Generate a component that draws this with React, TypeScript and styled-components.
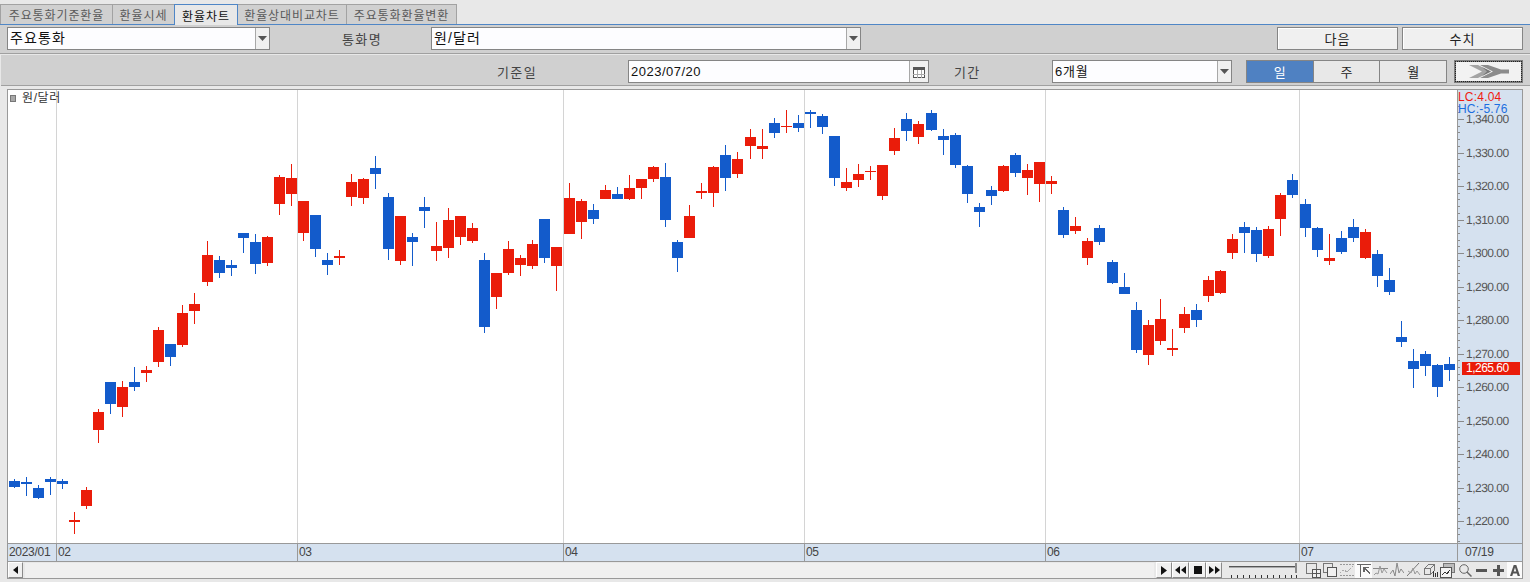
import styled, { createGlobalStyle } from "styled-components"

const FONT = `"Liberation Sans", "Noto Sans CJK KR", sans-serif`

const GlobalStyle = createGlobalStyle`
  html, body {
    margin: 0;
    padding: 0;
    background: #e8e8e8;
    overflow: hidden;
  }
  * {
    box-sizing: border-box;
  }
`

const RED = "#ea1c0a"
const BLUE = "#135bcb"

// x, body top, body bottom, wick top, wick bottom, up
type Candle = [number, number, number, number, number, 0 | 1]

const CANDLES: Candle[] = [
  [14, 481, 487, 479, 488, 0], [26, 482, 484, 477, 496, 0], [38, 488, 498, 485, 499, 0],
  [50, 479, 482, 477, 495, 0], [62, 481, 484, 479, 489, 0], [74, 520, 522, 512, 534, 1],
  [86, 490, 506, 487, 509, 1], [98, 412, 430, 409, 443, 1], [110, 382, 404, 382, 414, 0],
  [122, 387, 407, 381, 417, 1], [134, 382, 387, 367, 391, 0], [146, 370, 373, 366, 382, 1],
  [158, 330, 362, 327, 367, 1], [170, 344, 357, 344, 366, 0], [182, 313, 345, 305, 347, 1],
  [194, 304, 311, 293, 324, 1], [207, 255, 282, 241, 286, 1], [219, 260, 273, 256, 278, 0],
  [231, 265, 268, 260, 276, 0], [243, 233, 238, 233, 253, 0], [255, 242, 264, 234, 274, 0],
  [267, 237, 263, 236, 266, 1], [279, 177, 204, 175, 215, 1], [291, 178, 194, 164, 206, 1],
  [303, 201, 233, 201, 241, 1], [315, 215, 249, 215, 257, 0], [327, 260, 265, 253, 275, 0],
  [339, 256, 258, 250, 265, 1], [351, 182, 197, 174, 206, 1], [363, 179, 198, 178, 204, 1],
  [375, 168, 174, 156, 189, 0], [388, 197, 249, 193, 260, 0], [400, 216, 261, 216, 265, 1],
  [412, 237, 242, 233, 266, 0], [424, 207, 211, 197, 228, 0], [436, 246, 251, 222, 261, 1],
  [448, 220, 248, 208, 258, 1], [460, 216, 237, 216, 245, 1], [472, 228, 241, 223, 243, 1],
  [484, 260, 327, 253, 333, 0], [496, 273, 297, 273, 309, 1], [508, 249, 273, 241, 275, 1],
  [520, 258, 265, 255, 276, 1], [532, 244, 266, 240, 269, 1], [544, 219, 258, 219, 263, 0],
  [556, 247, 266, 247, 291, 1], [569, 198, 234, 183, 234, 1], [581, 201, 222, 199, 239, 1],
  [593, 210, 219, 204, 224, 0], [605, 190, 199, 185, 199, 1], [617, 194, 199, 187, 199, 0],
  [629, 188, 199, 175, 200, 1], [641, 179, 188, 179, 199, 1], [653, 167, 179, 166, 182, 1],
  [665, 177, 220, 163, 227, 0], [677, 242, 258, 240, 272, 0], [689, 216, 238, 205, 238, 1],
  [701, 191, 193, 183, 199, 1], [713, 167, 193, 166, 207, 1], [725, 155, 178, 145, 191, 0],
  [737, 159, 174, 152, 178, 1], [750, 137, 146, 129, 159, 1], [762, 146, 149, 129, 159, 1],
  [774, 123, 133, 118, 138, 0], [786, 126, 127, 110, 133, 1], [798, 123, 128, 115, 132, 0],
  [810, 112, 114, 110, 128, 0], [822, 116, 127, 114, 134, 0], [834, 136, 178, 136, 186, 0],
  [846, 182, 188, 168, 191, 1], [858, 174, 180, 164, 187, 1], [870, 171, 172, 166, 180, 1],
  [882, 165, 196, 165, 200, 1], [894, 138, 151, 128, 155, 1], [906, 119, 131, 113, 141, 0],
  [918, 124, 137, 121, 144, 1], [931, 113, 130, 110, 131, 0], [943, 136, 140, 129, 155, 0],
  [955, 135, 165, 133, 168, 0], [967, 166, 194, 165, 203, 0], [979, 207, 212, 203, 227, 0],
  [991, 190, 196, 186, 205, 0], [1003, 166, 191, 165, 192, 1], [1015, 155, 173, 153, 177, 0],
  [1027, 170, 178, 164, 195, 1], [1039, 162, 184, 162, 202, 1], [1051, 181, 184, 176, 194, 1],
  [1063, 210, 235, 207, 238, 0], [1075, 226, 231, 217, 234, 1], [1087, 241, 258, 238, 265, 1],
  [1099, 228, 242, 225, 245, 0], [1112, 262, 283, 260, 284, 0], [1124, 287, 294, 273, 294, 0],
  [1136, 310, 350, 302, 353, 0], [1148, 325, 355, 320, 365, 1], [1160, 319, 341, 299, 345, 1],
  [1172, 348, 350, 329, 356, 1], [1184, 314, 328, 307, 333, 1], [1196, 310, 320, 304, 327, 0],
  [1208, 280, 296, 276, 302, 1], [1220, 271, 293, 270, 294, 1], [1232, 239, 253, 234, 259, 1],
  [1244, 227, 233, 222, 253, 0], [1256, 230, 254, 227, 262, 0], [1268, 229, 256, 226, 258, 1],
  [1280, 195, 219, 193, 236, 1], [1292, 180, 195, 174, 198, 0], [1305, 204, 228, 199, 237, 0],
  [1317, 228, 250, 227, 257, 0], [1329, 258, 261, 234, 265, 1], [1341, 238, 252, 231, 254, 0],
  [1353, 227, 238, 219, 242, 0], [1365, 232, 258, 229, 259, 1], [1377, 254, 276, 250, 287, 0],
  [1389, 280, 292, 268, 295, 0], [1401, 337, 342, 321, 347, 0], [1413, 361, 369, 349, 388, 0],
  [1425, 354, 366, 351, 376, 0], [1437, 365, 387, 364, 397, 0], [1449, 364, 370, 357, 381, 0],
]

const GRID_X = [56, 297, 563, 804, 1045, 1299]
const PRICES = [1340, 1330, 1320, 1310, 1300, 1290, 1280, 1270, 1260, 1250, 1240, 1230, 1220]
const priceY = (v: number) => Math.round(186 + (1320 - v) * 3.35)

const Page = styled.div`
  width: 1530px;
  height: 582px;
  overflow: hidden;
  background: #e8e8e8;
  font-family: ${FONT};
  color: #222;
`

const TabBar = styled.div`
  display: flex;
  align-items: flex-end;
  height: 25px;
  padding-left: 1px;
  border-bottom: 1px solid #4f86c6;
`

const Tab = styled.div<{ $width: number; $active?: boolean }>`
  width: ${(p) => p.$width}px;
  height: ${(p) => (p.$active ? 21 : 20)}px;
  margin-bottom: ${(p) => (p.$active ? -1 : 0)}px;
  margin-left: -1px;
  display: flex;
  align-items: center;
  justify-content: center;
  font-size: 12px;
  letter-spacing: 0.9px;
  color: ${(p) => (p.$active ? "#111" : "#5a5a5a")};
  background: ${(p) => (p.$active ? "#e8e8e8" : "#d0d0d0")};
  border: 1px solid ${(p) => (p.$active ? "#4f86c6" : "#a2a2a2")};
  border-bottom: ${(p) => (p.$active ? "none" : "0")};
  position: relative;
  z-index: ${(p) => (p.$active ? 1 : 0)};
`

const TopRow = styled.div`
  display: flex;
  align-items: center;
  height: 29px;
  padding: 0 7px 1px;
  background: #d0d0d0;
  border-bottom: 1px solid #a0a0a0;
`

const FilterRow = styled.div`
  display: flex;
  align-items: center;
  height: 31px;
  margin: 1px 0 0 1px;
  padding: 3px 0 0 495px;
  background: #d0d0d0;
  border-bottom: 1px solid #a0a0a0;
`

const FieldLabel = styled.div<{ $width: number; $gap?: number; $indent?: number }>`
  width: ${(p) => p.$width}px;
  margin-left: ${(p) => p.$gap ?? 0}px;
  padding-left: ${(p) => p.$indent ?? 0}px;
  font-size: 13px;
  letter-spacing: 1.4px;
  color: #444;
  flex: none;
`

const SelectBox = styled.div<{ $width: number; $gap?: number }>`
  width: ${(p) => p.$width}px;
  height: 23px;
  margin-left: ${(p) => p.$gap ?? 0}px;
  flex: none;
  display: flex;
  align-items: stretch;
  background: #fdfdff;
  border: 1px solid #858585;
`

const SelectText = styled.div<{ $size?: number; $spacing?: number }>`
  flex: 1;
  padding-left: 2px;
  font-size: ${(p) => p.$size ?? 14}px;
  line-height: 21px;
  letter-spacing: ${(p) => p.$spacing ?? 1.1}px;
  color: #111;
`

const SelectArrow = styled.div<{ $width?: number }>`
  width: ${(p) => p.$width ?? 14}px;
  display: flex;
  align-items: center;
  justify-content: center;
  background: #f0f0f0;
  border-left: 1px solid #a8a8a8;
  svg {
    display: block;
  }
`

const ActionButton = styled.button<{ $gap?: string }>`
  width: 121px;
  height: 23px;
  margin-left: ${(p) => p.$gap ?? "4px"};
  padding: 0;
  flex: none;
  font-family: ${FONT};
  font-size: 13px;
  letter-spacing: 1px;
  color: #222;
  background: #f0f0f0;
  border: 1px solid #858585;
  box-shadow: inset 1px 1px 0 #fff;
`

const Segment = styled.div`
  width: 201px;
  height: 23px;
  margin-left: 14px;
  flex: none;
  display: flex;
  border: 1px solid #858585;
`

const SegmentItem = styled.div<{ $active?: boolean }>`
  flex: 1;
  display: flex;
  align-items: center;
  justify-content: center;
  font-size: 13px;
  color: ${(p) => (p.$active ? "#fff" : "#222")};
  background: ${(p) => (p.$active ? "#4f81c2" : "#e8e8e8")};
  & + & {
    border-left: 1px solid #858585;
  }
`

const NextButton = styled.div`
  width: 69px;
  height: 23px;
  margin-left: 7px;
  flex: none;
  display: flex;
  align-items: center;
  justify-content: center;
  background: #f2f2f2;
  border: 2px solid #7d7d7d;
  outline: 1px dotted #222;
  outline-offset: -2px;
`

const ChartFrame = styled.div`
  width: 1516px;
  margin: 3px 0 0 7px;
  background: #e8e8e8;
  border: 1px solid #999;
`

const PlotRow = styled.div`
  display: flex;
  height: 453px;
`

const Plot = styled.div`
  position: relative;
  width: 1449px;
  flex: none;
  background: #fff;
  svg {
    display: block;
  }
`

const Legend = styled.div`
  position: absolute;
  top: 1px;
  left: 2px;
  display: flex;
  align-items: center;
  gap: 6px;
  font-size: 12px;
  line-height: 14px;
  letter-spacing: 0.6px;
  color: #333;
`

const LegendMark = styled.span`
  width: 6px;
  height: 7px;
  background: #a8a8a8;
  border: 1px solid #777;
`

const PriceAxis = styled.div`
  position: relative;
  flex: 1;
  background: #d5e1ef;
  border-left: 1px solid #999;
  overflow: hidden;
  svg {
    display: block;
  }
`

const AxisNote = styled.div<{ $color: string; $top: number }>`
  position: absolute;
  left: 0;
  top: ${(p) => p.$top}px;
  font-size: 12px;
  line-height: 13px;
  letter-spacing: 0.2px;
  color: ${(p) => p.$color};
`

const PriceTag = styled.div`
  position: absolute;
  left: 4px;
  top: 272px;
  width: 58px;
  height: 13px;
  padding-left: 4px;
  font-size: 12px;
  line-height: 13px;
  letter-spacing: -0.5px;
  color: #fff;
  background: ${RED};
`

const DateAxis = styled.div`
  display: grid;
  grid-template-columns: 48px 241px 266px 241px 241px 254px 158px 65px;
  height: 19px;
  background: #d5e1ef;
  border-top: 1px solid #999;
  border-bottom: 1px solid #999;
`

const DateCell = styled.div<{ $wide?: boolean }>`
  padding-left: ${(p) => (p.$wide ? 7 : 1)}px;
  font-size: 12px;
  line-height: 17px;
  letter-spacing: -0.3px;
  color: #444;
  & + & {
    border-left: 1px solid #999;
  }
`

const ToolRow = styled.div`
  display: flex;
  align-items: stretch;
  height: 16px;
`

const ScrollButton = styled.div<{ $width: number; $gap?: number }>`
  width: ${(p) => p.$width}px;
  margin-left: ${(p) => p.$gap ?? 0}px;
  flex: none;
  display: flex;
  align-items: center;
  justify-content: center;
  background: #f0f0f0;
  border: 1px solid #fff;
  border-right-color: #8a8a8a;
  border-bottom-color: #8a8a8a;
`

const ScrollTrack = styled.div`
  width: 1129px;
  margin: 1px 0 0 2px;
  flex: none;
  background: #f0f0f0;
`

const ToolIcon = styled.div<{ $width: number; $gap?: number; $on?: boolean }>`
  width: ${(p) => p.$width}px;
  margin-left: ${(p) => p.$gap ?? 0}px;
  flex: none;
  display: flex;
  align-items: center;
  justify-content: center;
  background: ${(p) => (p.$on ? "#fbfbfb" : "transparent")};
  svg {
    display: block;
  }
`

const Arrow = ({ size = 9 }: { size?: number }) => (
  <svg width={size} height={5} viewBox="0 0 9 5">
    <path d="M0 0h9L4.500 5z" fill="#555" />
  </svg>
)

const Chart = () => (
  <svg width={1449} height={453} viewBox="8 90 1449 453" shapeRendering="crispEdges">
    {GRID_X.map((x) => (
      <rect key={x} x={x} y={90} width={1} height={453} fill="#d4d4d4" />
    ))}
    {CANDLES.map(([x, top, bottom, high, low, up]) => (
      <g key={x} fill={up ? RED : BLUE}>
        <rect x={x} y={high} width={1} height={low - high} />
        <rect x={x - 5} y={top} width={11} height={bottom - top} />
      </g>
    ))}
  </svg>
)

const AxisScale = () => {
  const minor: number[] = []
  for (let v = 1344; v >= 1212; v -= 2) {
    if (v % 10 !== 0) minor.push(v)
  }
  return (
    <svg width={64} height={453} viewBox="1458 90 64 453" shapeRendering="crispEdges">
      {minor.map((v) => (
        <rect key={v} x={1458} y={priceY(v)} width={2} height={1} fill="#8a8a8a" />
      ))}
      {PRICES.map((v) => (
        <g key={v}>
          <rect x={1458} y={priceY(v)} width={6} height={1} fill="#8a8a8a" />
          <text
            x={1466}
            y={priceY(v) + 4}
            fontFamily={FONT}
            fontSize={12}
            letterSpacing={-0.5}
            fill="#555"
            textRendering="geometricPrecision"
          >
            {v.toLocaleString("en-US")}.00
          </text>
        </g>
      ))}
    </svg>
  )
}

const Slider = () => (
  <svg width={70} height={16} viewBox="0 0 70 16" shapeRendering="crispEdges">
    <rect x={1} y={4} width={66} height={1} fill="#555" />
    <rect x={1} y={5} width={66} height={1} fill="#aaa" />
    <path d="M67 1h2v10h-2z" fill="#8a8a8a" />
    {[3, 9, 15, 21, 27, 33, 39, 45, 51, 57, 63, 68].map((x) => (
      <rect key={x} x={x} y={13} width={1} height={3} fill="#333" />
    ))}
  </svg>
)

const S = { stroke: "#777", fill: "none" }

const App = () => {
  return (
    <Page>
      <GlobalStyle />
      <TabBar>
        <Tab $width={113}>주요통화기준환율</Tab>
        <Tab $width={63}>환율시세</Tab>
        <Tab $width={64} $active>
          환율차트
        </Tab>
        <Tab $width={110}>환율상대비교차트</Tab>
        <Tab $width={111}>주요통화환율변환</Tab>
      </TabBar>

      <TopRow>
        <SelectBox $width={263}>
          <SelectText>주요통화</SelectText>
          <SelectArrow>
            <Arrow />
          </SelectArrow>
        </SelectBox>
        <FieldLabel $width={161} $indent={72}>
          통화명
        </FieldLabel>
        <SelectBox $width={430}>
          <SelectText>원/달러</SelectText>
          <SelectArrow>
            <Arrow />
          </SelectArrow>
        </SelectBox>
        <ActionButton $gap="416px">다음</ActionButton>
        <ActionButton>수치</ActionButton>
      </TopRow>

      <FilterRow>
        <FieldLabel $width={132} $indent={1}>
          기준일
        </FieldLabel>
        <SelectBox $width={301}>
          <SelectText $size={13} $spacing={0.5}>
            2023/07/20
          </SelectText>
          <SelectArrow $width={19}>
            <svg width={12} height={12} viewBox="0 0 12 12" shapeRendering="crispEdges">
              <rect x={0.5} y={1.5} width={11} height={10} fill="#fff" stroke="#555" />
              <rect x={0} y={1} width={12} height={3} fill="#555" />
              <path d="M4 4v8M8 4v8M0 8h12" stroke="#aaa" />
            </svg>
          </SelectArrow>
        </SelectBox>
        <FieldLabel $width={98} $gap={25}>
          기간
        </FieldLabel>
        <SelectBox $width={180}>
          <SelectText $size={13} $spacing={0.8}>
            6개월
          </SelectText>
          <SelectArrow>
            <Arrow />
          </SelectArrow>
        </SelectBox>
        <Segment>
          <SegmentItem $active>일</SegmentItem>
          <SegmentItem>주</SegmentItem>
          <SegmentItem>월</SegmentItem>
        </Segment>
        <NextButton>
          <svg width={40} height={13} viewBox="0 0 40 13">
            <path d="M0 0h9l13 6.500-13 6.500H0l13-6.500z" fill="#a4a4a4" />
            <path d="M11 0h8l13 4.500h8v4h-8L19 13h-8l13-6.500z" fill="#8c8c8c" />
            <path d="M13 2l9 4.500-9 4.500 5-4.500z" fill="#777" />
          </svg>
        </NextButton>
      </FilterRow>

      <ChartFrame>
        <PlotRow>
          <Plot>
            <Chart />
            <Legend>
              <LegendMark />
              원/달러
            </Legend>
          </Plot>
          <PriceAxis>
            <AxisScale />
            <AxisNote $color="#f01a10" $top={1}>
              LC:4.04
            </AxisNote>
            <AxisNote $color="#1c6fe0" $top={13}>
              HC:-5.76
            </AxisNote>
            <PriceTag>1,265.60</PriceTag>
          </PriceAxis>
        </PlotRow>

        <DateAxis>
          <DateCell>2023/01</DateCell>
          <DateCell>02</DateCell>
          <DateCell>03</DateCell>
          <DateCell>04</DateCell>
          <DateCell>05</DateCell>
          <DateCell>06</DateCell>
          <DateCell>07</DateCell>
          <DateCell $wide>07/19</DateCell>
        </DateAxis>

        <ToolRow>
          <ScrollButton $width={15}>
            <svg width={5} height={8} viewBox="0 0 5 8">
              <path d="M5 0v8L0 4z" fill="#111" />
            </svg>
          </ScrollButton>
          <ScrollTrack />
          <ScrollButton $width={16} $gap={2}>
            <svg width={6} height={9} viewBox="0 0 6 9">
              <path d="M0 0l6 4.500L0 9z" fill="#111" />
            </svg>
          </ScrollButton>
          <ScrollButton $width={17}>
            <svg width={11} height={8} viewBox="0 0 11 8">
              <path d="M5 0v8L0 4zM11 0v8L6 4z" fill="#111" />
            </svg>
          </ScrollButton>
          <ScrollButton $width={17}>
            <svg width={8} height={8} viewBox="0 0 8 8">
              <rect width={8} height={8} fill="#111" />
            </svg>
          </ScrollButton>
          <ScrollButton $width={16}>
            <svg width={11} height={8} viewBox="0 0 11 8">
              <path d="M0 0v8l5-4zM6 0v8l5-4z" fill="#111" />
            </svg>
          </ScrollButton>
          <ToolIcon $width={70} $gap={6}>
            <Slider />
          </ToolIcon>
          <ToolIcon $width={15} $gap={8}>
            <svg width={15} height={15} viewBox="0 0 15 15" shapeRendering="crispEdges">
              <rect x={0.5} y={0.500} width={10} height={10} {...S} />
              <rect x={6.500} y={6.500} width={8} height={8} fill="#f0f0f0" stroke="#555" />
              <path d="M10.500 6v9M6 10.500h9" stroke="#555" />
            </svg>
          </ToolIcon>
          <ToolIcon $width={14} $gap={2}>
            <svg width={14} height={14} viewBox="0 0 14 14" shapeRendering="crispEdges">
              <rect x={0.5} y={0.500} width={9} height={9} {...S} />
              <rect x={4.500} y={4.500} width={9} height={9} fill="#f0f0f0" stroke="#555" />
            </svg>
          </ToolIcon>
          <ToolIcon $width={16} $gap={2}>
            <svg width={16} height={14} viewBox="0 0 16 14" shapeRendering="crispEdges">
              <path d="M0.500 1.500h15M0.500 12.500h15" stroke="#999" strokeDasharray="2 1" />
              <path d="M1 10l4-3 3 2 6-6" stroke="#aaa" fill="none" strokeDasharray="2 1" />
            </svg>
          </ToolIcon>
          <ToolIcon $width={17} $on>
            <svg width={14} height={14} viewBox="0 0 14 14" shapeRendering="crispEdges">
              <path d="M0 1.500h14M3.500 1v13" stroke="#666" />
              <path d="M6 4h6v1H9l4 5-1 1-4-5v3H6z" fill="#666" />
            </svg>
          </ToolIcon>
          <ToolIcon $width={16}>
            <svg width={15} height={13} viewBox="0 0 15 13" fill="none">
              <path d="M0 4.500h15" stroke="#888" />
              <path d="M1 11l2-2 2 1 2-8 2 7 2-4 3 4" stroke="#999" />
            </svg>
          </ToolIcon>
          <ToolIcon $width={16} $gap={1}>
            <svg width={14} height={14} viewBox="0 0 14 14" fill="none">
              <path d="M0 11l3-4 2 6 2-13 2 10 2-4 3 4" stroke="#888" />
            </svg>
          </ToolIcon>
          <ToolIcon $width={16} $gap={1}>
            <svg width={14} height={14} viewBox="0 0 14 14" fill="none">
              <path d="M0 13L12 0" stroke="#777" />
              <path d="M1 8l3 2 2-5 2 6 2-3 3 4" stroke="#999" />
            </svg>
          </ToolIcon>
          <ToolIcon $width={16} $gap={1}>
            <svg width={15} height={14} viewBox="0 0 15 14" fill="none" shapeRendering="crispEdges">
              <path d="M0.500 5.500l4-4h6v6l-4 4h-6zM0.500 5.500h6v6M6.500 5.500l4-4" stroke="#777" />
              <path d="M9 8v6M11 10v4M13 9v5" stroke="#333" />
            </svg>
          </ToolIcon>
          <ToolIcon $width={15} $gap={1}>
            <svg width={15} height={15} viewBox="0 0 15 15" fill="none" shapeRendering="crispEdges">
              <rect x={3.500} y={0.500} width={11} height={9} fill="#bbb" stroke="#777" />
              <rect x={0.500} y={4.500} width={11} height={10} fill="#f4f4f4" stroke="#555" />
              <path d="M2 12l3-3 2 2 3-4" stroke="#333" />
            </svg>
          </ToolIcon>
          <ToolIcon $width={14} $gap={3}>
            <svg width={13} height={13} viewBox="0 0 13 13" fill="none" stroke="#666">
              <circle cx={5} cy={5} r={4.300} />
              <path d="M8 8l4.500 4.500" strokeWidth={1.500} />
            </svg>
          </ToolIcon>
          <ToolIcon $width={11} $gap={4}>
            <svg width={11} height={3} viewBox="0 0 11 3">
              <rect width={11} height={3} fill="#555" />
            </svg>
          </ToolIcon>
          <ToolIcon $width={12} $gap={5}>
            <svg width={11} height={11} viewBox="0 0 11 11">
              <path d="M4 0h3v4h4v3H7v4H4V7H0V4h4z" fill="#555" />
            </svg>
          </ToolIcon>
          <ToolIcon $width={15} $gap={3} $on>
            <svg width={10} height={11} viewBox="0 0 10 11">
              <path d="M3.700 0h2.600L10 11H7.700l-.8-2.500H3.100L2.300 11H0zM3.700 6.500h2.600L5 2.500z" fill="#555" fillRule="evenodd" />
            </svg>
          </ToolIcon>
        </ToolRow>
      </ChartFrame>
    </Page>
  )
}

export default App
